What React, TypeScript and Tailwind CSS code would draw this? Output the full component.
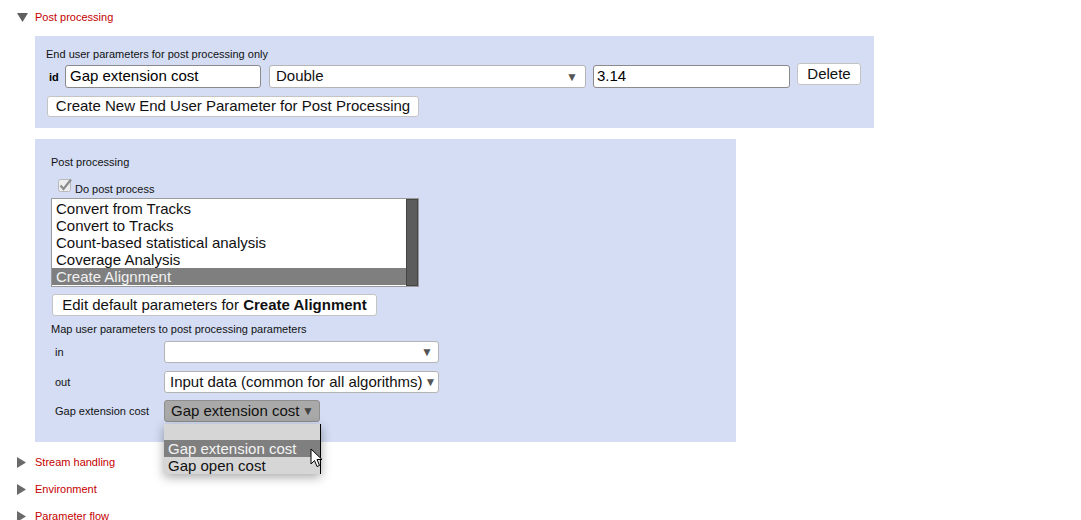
import { type ReactNode } from 'react'

const font = { fontFamily: '"Liberation Sans", Arial, sans-serif' }

function DownTri() {
  return (
    <svg width="11" height="9" viewBox="0 0 11 9" className="shrink-0">
      <polygon points="0,0 11,0 5.5,9" fill="#5f5f5f" />
    </svg>
  )
}

function RightTri() {
  return (
    <svg width="9" height="11" viewBox="0 0 9 11" className="shrink-0">
      <polygon points="0,0 9,5.5 0,11" fill="#6a6a6a" />
    </svg>
  )
}

function Section({ title }: { title: string }) {
  return (
    <div className="flex h-[14px] items-center">
      <div className="flex w-[35px] justify-start pl-[17px]">
        <RightTri />
      </div>
      <span className="text-[11px] text-[#c40000]">{title}</span>
    </div>
  )
}

function SelectBox({
  children,
  className = '',
}: {
  children?: ReactNode
  className?: string
}) {
  return (
    <div
      className={`flex items-center justify-between overflow-hidden whitespace-nowrap rounded-[3px] border border-[#b4b4b4] bg-white pl-[5px] pr-[5px] text-[15px] text-[#111] ${className}`}
    >
      <span>{children}</span>
      <span className="ml-[2px] text-[12px] text-[#555]">▼</span>
    </div>
  )
}

function Btn({ children, className = '' }: { children: ReactNode; className?: string }) {
  return (
    <div
      className={`flex items-center justify-center rounded-[3px] border border-[#c4c4c4] bg-white text-[15px] text-[#111] ${className}`}
    >
      {children}
    </div>
  )
}

const listItems = [
  'Convert from Tracks',
  'Convert to Tracks',
  'Count-based statistical analysis',
  'Coverage Analysis',
  'Create Alignment',
]

export default function App() {
  return (
    <div style={font} className="h-[520px] w-[1081px] overflow-hidden bg-white pt-[10px] text-black">
      <div className="flex h-[14px] items-center">
        <div className="flex w-[35px] pl-[17px]">
          <DownTri />
        </div>
        <span className="text-[11px] text-[#c40000]">Post processing</span>
      </div>

      {/* end user parameters */}
      <div className="ml-[35px] mt-[12px] h-[92px] w-[839px] bg-[#d4ddf4] pl-[11px] pt-[11px]">
        <div className="h-[14px] text-[11px] leading-[14px] text-[#111]">
          End user parameters for post processing only
        </div>
        <div className="mt-[4px] flex items-start">
          <span className="ml-[3px] mt-[4px] w-[16px] text-[11px] font-bold">id</span>
          <div className="flex h-[23px] w-[196px] items-center rounded-[3px] border border-[#8a8a8a] bg-white pl-[4px] text-[15px]">
            Gap extension cost
          </div>
          <SelectBox className="ml-[8px] h-[23px] w-[317px] pl-[6px] pr-[7px]">Double</SelectBox>
          <div className="ml-[7px] flex h-[23px] w-[197px] items-center rounded-[3px] border border-[#8a8a8a] bg-white pl-[3px] text-[15px]">
            3.14
          </div>
          <Btn className="-mt-[2px] ml-[7px] h-[22px] w-[64px]">Delete</Btn>
        </div>
        <Btn className="ml-[1px] mt-[8px] h-[21px] w-[372px]">
          Create New End User Parameter for Post Processing
        </Btn>
      </div>

      {/* post processing panel */}
      <div className="relative ml-[35px] mt-[11px] h-[303px] w-[701px] bg-[#d4ddf4] pl-[16px] pt-[16px]">
        <div className="h-[14px] text-[11px] leading-[14px] text-[#111]">Post processing</div>
        <div className="mt-[9px] flex h-[18px] items-end">
          <svg width="16" height="15" viewBox="0 0 16 15" className="mb-[3px] ml-[7px]">
            <rect x="0.5" y="1.5" width="12" height="12" rx="2" fill="#eeeeee" stroke="#b8b8b8" />
            <path d="M2.5 7.5 L5.5 11 L13 1.5" fill="none" stroke="#8c8c8c" strokeWidth="2.2" />
          </svg>
          <span className="ml-[1px] text-[11px] leading-[14px] text-[#111]">Do post process</span>
        </div>
        <div className="mt-[2px] flex h-[89px] w-[368px] border border-[#9a9a9a] bg-white">
          <div className="flex-1 pt-[1px]">
            {listItems.map((it, i) => (
              <div
                key={it}
                className={`h-[17px] pl-[4px] text-[15px] leading-[17px] ${
                  i === 4 ? 'bg-[#7f7f7f] text-[#f2f2f2]' : 'text-[#111]'
                }`}
              >
                {it}
              </div>
            ))}
          </div>
          <div className="w-[12px] border border-[#444] bg-[#5c5c5c]" />
        </div>
        <Btn className="ml-[1px] mt-[7px] h-[22px] w-[325px]">
          Edit default parameters for&nbsp;<b>Create Alignment</b>
        </Btn>
        <div className="mt-[6px] h-[14px] text-[11px] leading-[14px] text-[#111]">
          Map user parameters to post processing parameters
        </div>
        <div className="mt-[5px] flex items-center">
          <span className="w-[113px] pl-[4px] text-[11px] text-[#111]">in</span>
          <SelectBox className="h-[22px] w-[275px]" />
        </div>
        <div className="mt-[8px] flex items-center">
          <span className="w-[113px] pl-[4px] text-[11px] text-[#111]">out</span>
          <SelectBox className="h-[22px] w-[275px]">Input data (common for all algorithms)</SelectBox>
        </div>
        <div className="mt-[7px] flex items-center">
          <span className="w-[113px] pl-[4px] text-[11px] text-[#111]">Gap extension cost</span>
          <div className="relative">
            <div className="flex h-[22px] w-[156px] items-center justify-between whitespace-nowrap rounded-[3px] border border-[#8e8e8e] bg-[#a9a9a9] pl-[6px] pr-[5px] text-[15px] text-[#111]">
              <span>Gap extension cost</span>
              <span className="text-[12px] text-[#444]">▼</span>
            </div>
            <div className="absolute left-0 top-[24px] z-10 w-[157px] border-r border-black bg-[#d6d6d6] shadow-[0_3px_10px_rgba(0,0,0,0.35)]">
              <div className="h-[16px]" />
              <div className="h-[17px] bg-[#7f7f7f] pl-[4px] text-[15px] leading-[17px] text-[#f4f4f4]">
                Gap extension cost
              </div>
              <div className="h-[17px] pl-[4px] text-[15px] leading-[17px] text-[#111]">
                Gap open cost
              </div>
            </div>
            <svg
              width="13"
              height="20"
              viewBox="0 0 13 20"
              className="absolute left-[146px] top-[48px] z-20"
            >
              <path
                d="M1 1 L1 16 L4.5 12.5 L7 18.5 L9.5 17.5 L7 11.5 L12 11.5 Z"
                fill="#fff"
                stroke="#000"
                strokeWidth="1"
                strokeLinejoin="round"
              />
            </svg>
          </div>
        </div>
      </div>

      <div className="mt-[13px] flex flex-col gap-[13px]">
        <Section title="Stream handling" />
        <Section title="Environment" />
        <Section title="Parameter flow" />
      </div>
    </div>
  )
}
